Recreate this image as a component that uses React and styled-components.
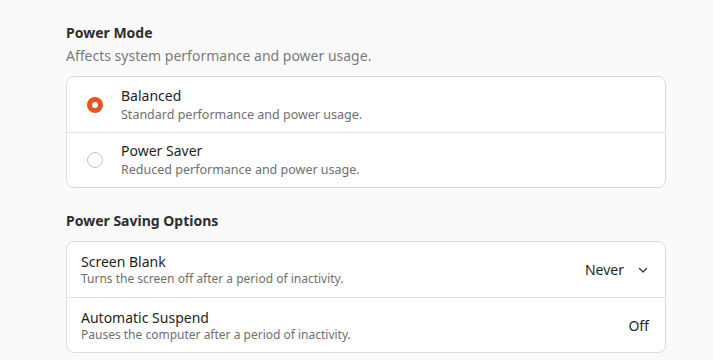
import React from 'react';
import styled, { createGlobalStyle } from 'styled-components';

const GlobalStyle = createGlobalStyle`
  html, body {
    margin: 0;
    padding: 0;
    background: #fafafa;
    font-family: 'Noto Sans', 'Open Sans', sans-serif;
    color: #2e2e2e;
  }
`;

const Page = styled.div`
  width: 600px;
  padding: 23px 0 0 66px;
  display: flex;
  flex-direction: column;
`;

const Group = styled.section`
  display: flex;
  flex-direction: column;
  margin-bottom: ${(p) => p.gap || 0}px;
`;

const GroupTitle = styled.h2`
  margin: 0;
  font-size: 14px;
  font-weight: 700;
  line-height: 20px;
  color: #2e2e2e;
`;

const GroupDesc = styled.p`
  margin: 3px 0 0;
  font-size: 14px;
  line-height: 20px;
  color: #7a7a7a;
`;

const Card = styled.div`
  margin-top: ${(p) => p.top}px;
  background: #ffffff;
  border: 1px solid #dcdcdc;
  border-radius: 8px;
  overflow: hidden;
`;

const Row = styled.div`
  display: flex;
  align-items: center;
  height: 55px;
  padding: 0 14px 0 ${(p) => (p.radio ? 20 : 14)}px;
  box-sizing: border-box;
  & + & {
    border-top: 1px solid #e3e3e3;
  }
`;

const Radio = styled.span`
  width: 16px;
  height: 16px;
  border-radius: 50%;
  box-sizing: border-box;
  flex: none;
  margin-right: 18px;
  background: ${(p) => (p.checked ? '#e95420' : '#ffffff')};
  border: ${(p) => (p.checked ? 'none' : '1px solid #c4c4c4')};
  display: flex;
  align-items: center;
  justify-content: center;
  &::after {
    content: '';
    display: ${(p) => (p.checked ? 'block' : 'none')};
    width: 6px;
    height: 6px;
    border-radius: 50%;
    background: #ffffff;
  }
`;

const Labels = styled.div`
  flex: 1;
  display: flex;
  flex-direction: column;
`;

const Title = styled.div`
  font-size: 14px;
  line-height: ${(p) => (p.compact ? 18 : 19)}px;
  color: #1f1f1f;
`;

const Subtitle = styled.div`
  font-size: ${(p) => (p.compact ? 12 : 12.5)}px;
  line-height: ${(p) => (p.compact ? 15 : 19)}px;
  color: #6f6f6f;
`;

const Value = styled.div`
  display: flex;
  align-items: center;
  gap: 13px;
  margin-right: 2px;
  font-size: 14px;
  color: #1f1f1f;
`;

const Chevron = () => (
  <svg width="12" height="12" viewBox="0 0 12 12" fill="none">
    <path d="M2.5 4.5 L6 8 L9.5 4.5" stroke="#333" strokeWidth="1.2" strokeLinecap="round" strokeLinejoin="round" />
  </svg>
);

export default function App() {
  return (
    <>
      <GlobalStyle />
      <Page>
        <Group gap={23}>
          <GroupTitle>Power Mode</GroupTitle>
          <GroupDesc>Affects system performance and power usage.</GroupDesc>
          <Card top={10}>
            <Row radio>
              <Radio checked />
              <Labels>
                <Title>Balanced</Title>
                <Subtitle>Standard performance and power usage.</Subtitle>
              </Labels>
            </Row>
            <Row radio>
              <Radio />
              <Labels>
                <Title>Power Saver</Title>
                <Subtitle>Reduced performance and power usage.</Subtitle>
              </Labels>
            </Row>
          </Card>
        </Group>
        <Group>
          <GroupTitle>Power Saving Options</GroupTitle>
          <Card top={10}>
            <Row>
              <Labels>
                <Title compact>Screen Blank</Title>
                <Subtitle compact>Turns the screen off after a period of inactivity.</Subtitle>
              </Labels>
              <Value>
                Never
                <Chevron />
              </Value>
            </Row>
            <Row>
              <Labels>
                <Title compact>Automatic Suspend</Title>
                <Subtitle compact>Pauses the computer after a period of inactivity.</Subtitle>
              </Labels>
              <Value>Off</Value>
            </Row>
          </Card>
        </Group>
      </Page>
    </>
  );
}
